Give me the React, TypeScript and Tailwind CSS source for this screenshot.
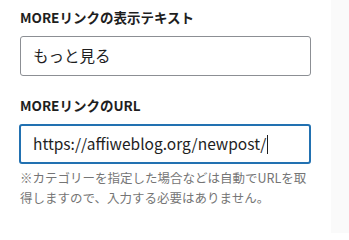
export default function App() {
  return (
    <div
      className="flex h-[233px] w-[349px] overflow-hidden bg-white text-[#1e1e1e]"
      style={{ fontFamily: '"Noto Sans CJK JP", "Noto Sans", sans-serif' }}
    >
      <div className="w-[331px] shrink-0 px-[20px] pt-[7px]">
        <label className="block text-[13.5px] font-semibold leading-[20px]">MOREリンクの表示テキスト</label>
        <div className="mt-[9px] flex h-[40px] w-[291px] items-center rounded-[3px] border border-[#8c8f94] px-[12px] text-[15.5px]">
          もっと見る
        </div>
        <label className="mt-[19px] block text-[13.5px] font-semibold leading-[20px]">MOREリンクのURL</label>
        <div className="mt-[9px] flex h-[40px] w-[292px] -ml-px items-center rounded-[3px] border-2 border-[#2271b1] px-[12px] text-[15.5px]">
          <span>https://affiweblog.org/newpost/</span>
          <span className="ml-px inline-block h-[19px] w-px bg-[#1e1e1e]" />
        </div>
        <p className="mt-[4px] text-[12.5px] leading-[20px] text-[#757575]">
          ※カテゴリーを指定した場合などは自動でURLを取得しますので、入力する必要はありません。
        </p>
      </div>
      <div className="flex-1 bg-[#fafafa]" />
    </div>
  );
}
